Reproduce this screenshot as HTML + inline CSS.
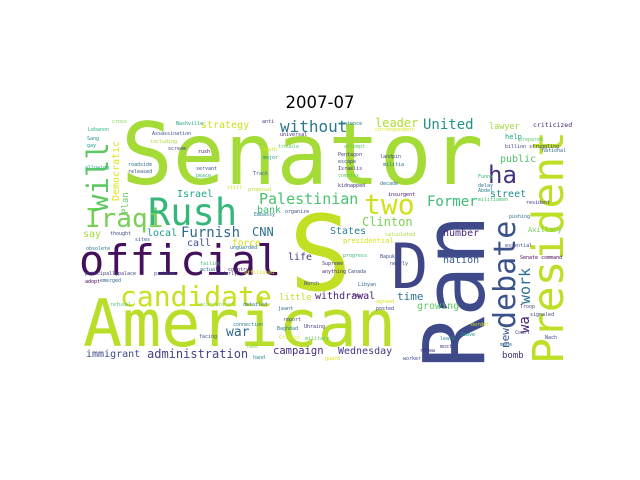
<!DOCTYPE html>
<html><head><meta charset="utf-8"><style>
html,body{margin:0;padding:0;background:#fff;}
#c{position:relative;width:640px;height:480px;overflow:hidden;background:#fff;}
#c span{position:absolute;white-space:nowrap;line-height:1;font-family:"DejaVu Sans Mono","Liberation Mono",monospace;}
#c span.r{transform:rotate(-90deg);transform-origin:0 0;}
#t{position:absolute;left:0;width:640px;top:95px;text-align:center;font-family:"DejaVu Sans","Liberation Sans",sans-serif;font-size:16.5px;color:#000;line-height:1;}
</style></head><body><div id="c">
<div id="t">2007-07</div>

<span style="left:121px;top:112px;font-size:86px;color:#a5db36">Senator</span>
<span style="left:83px;top:292px;font-size:65px;color:#b8de29">American</span>
<span style="left:289px;top:202px;font-size:104px;color:#c2df23">S</span>
<span style="left:79px;top:240px;font-size:42px;color:#440f5b">official</span>
<span style="left:148px;top:194px;font-size:37px;color:#35b779">Rush</span>
<span style="left:120px;top:283px;font-size:28px;color:#c8e020">candidate</span>
<span style="left:391px;top:236px;font-size:62px;color:#404588">D</span>
<span style="left:364px;top:191px;font-size:28px;color:#d0e11c">two</span>
<span style="left:488px;top:163px;font-size:24px;color:#46307e">ha</span>
<span style="left:85px;top:206px;font-size:26px;color:#75d054">Iraqi</span>
<span style="left:259px;top:192px;font-size:15px;color:#4ac16d">Palestinian</span>

<span class="r" style="left:413px;top:368px;font-size:85px;color:#3e4a89">Ran</span>
<span class="r" style="left:528px;top:364px;font-size:43px;color:#bddf26">President</span>
<span class="r" style="left:491px;top:329px;font-size:30px;color:#3b528b">debate</span>
<span class="r" style="left:84px;top:212px;font-size:29px;color:#5ec962">will</span>
<span class="r" style="left:112px;top:201px;font-size:10px;color:#dde318">Democratic</span>
<span class="r" style="left:122px;top:214px;font-size:9px;color:#65cb5e">Plan</span>
<span class="r" style="left:518px;top:304px;font-size:15px;color:#2d708e">work</span>
<span class="r" style="left:518px;top:333px;font-size:14px;color:#481f70">wa</span>
<span class="r" style="left:500px;top:348px;font-size:11px;color:#3a548c">new</span>

<span style="left:201px;top:121px;font-size:10px;color:#cde11d">strategy</span>
<span style="left:280px;top:119px;font-size:16px;color:#2a788e">without</span>
<span style="left:177px;top:190px;font-size:10px;color:#22a785">Israel</span>
<span style="left:257px;top:206px;font-size:10px;color:#3dbc74">bank</span>
<span style="left:83px;top:230px;font-size:10px;color:#a2da37">say</span>
<span style="left:147px;top:229px;font-size:10px;color:#1f9a8a">local</span>
<span style="left:181px;top:226px;font-size:14px;color:#31688e">Furnish</span>
<span style="left:252px;top:226px;font-size:12px;color:#2c728e">CNN</span>
<span style="left:187px;top:239px;font-size:10px;color:#3e4c8a">call</span>
<span style="left:232px;top:239px;font-size:9.5px;color:#d5e21a">force</span>
<span style="left:288px;top:253px;font-size:10px;color:#453581">life</span>
<span style="left:226px;top:326px;font-size:13px;color:#31688e">war</span>
<span style="left:279px;top:294px;font-size:9px;color:#c0df25">little</span>
<span style="left:86px;top:350px;font-size:10px;color:#3e4989">immigrant</span>
<span style="left:147px;top:348px;font-size:12px;color:#414487">administration</span>
<span style="left:273px;top:346px;font-size:10.5px;color:#472d7b">campaign</span>
<span style="left:375px;top:117px;font-size:12px;color:#b0dd2f">leader</span>
<span style="left:423px;top:118px;font-size:14px;color:#21918c">United</span>
<span style="left:489px;top:123px;font-size:8.5px;color:#a0da39">lawyer</span>
<span style="left:533px;top:122px;font-size:6.5px;color:#482374">criticized</span>
<span style="left:500px;top:155px;font-size:10px;color:#4ac16d">public</span>
<span style="left:490px;top:190px;font-size:10px;color:#228c8d">street</span>
<span style="left:427px;top:195px;font-size:14px;color:#3bbb75">Former</span>
<span style="left:362px;top:216px;font-size:12px;color:#7ad151">Clinton</span>
<span style="left:330px;top:227px;font-size:10px;color:#26828e">States</span>
<span style="left:343px;top:238px;font-size:7px;color:#d8e219">presidential</span>
<span style="left:443px;top:229px;font-size:10px;color:#482878">number</span>
<span style="left:443px;top:256px;font-size:10px;color:#34608d">nation</span>
<span style="left:528px;top:227px;font-size:7px;color:#6ccd5a">Axillary</span>
<span style="left:397px;top:291px;font-size:11px;color:#2a768e">time</span>
<span style="left:315px;top:292px;font-size:10px;color:#482173">withdrawal</span>
<span style="left:417px;top:302px;font-size:10px;color:#5ac864">growing</span>
<span style="left:338px;top:347px;font-size:10px;color:#453882">Wednesday</span>
<span style="left:502px;top:352px;font-size:9px;color:#46337e">bomb</span>
<span style="left:505px;top:134px;font-size:7px;color:#1fa188">help</span>

<span style="left:112px;top:120px;font-size:5px;color:#7ad151">cross</span>
<span style="left:88px;top:128px;font-size:5px;color:#2db27d">Lebanon</span>
<span style="left:176px;top:122px;font-size:5px;color:#20a486">Nashville</span>
<span style="left:152px;top:132px;font-size:5px;color:#3f4788">Assassination</span>
<span style="left:150px;top:140px;font-size:5px;color:#addc30">including</span>
<span style="left:168px;top:147px;font-size:5px;color:#404688">scream</span>
<span style="left:87px;top:137px;font-size:5px;color:#218e8d">Sang</span>
<span style="left:87px;top:144px;font-size:5px;color:#1fa187">gay</span>
<span style="left:85px;top:166px;font-size:5px;color:#25ac82">allowing</span>
<span style="left:128px;top:163px;font-size:5px;color:#2c728e">roadside</span>
<span style="left:128px;top:170px;font-size:5px;color:#3a548c">released</span>
<span style="left:196px;top:167px;font-size:5px;color:#3f4a8a">servant</span>
<span style="left:196px;top:174px;font-size:5px;color:#35b779">peace</span>
<span style="left:198px;top:150px;font-size:5px;color:#481467">rush</span>
<span style="left:248px;top:188px;font-size:5px;color:#bddf26">proposal</span>
<span style="left:227px;top:186px;font-size:5px;color:#d2e21b">still</span>
<span style="left:253px;top:172px;font-size:5px;color:#306a8e">Track</span>
<span style="left:262px;top:148px;font-size:5px;color:#d0e11c">death</span>
<span style="left:263px;top:156px;font-size:5px;color:#1f968b">major</span>
<span style="left:278px;top:145px;font-size:5px;color:#5ac864">trouble</span>
<span style="left:262px;top:120px;font-size:5px;color:#443a83">anti</span>
<span style="left:280px;top:133px;font-size:5px;color:#472a7a">universal</span>
<span style="left:254px;top:213px;font-size:5px;color:#2a788e">Embassy</span>
<span style="left:285px;top:210px;font-size:5px;color:#3e4c8a">organize</span>
<span style="left:86px;top:247px;font-size:5px;color:#2c738e">obsolete</span>
<span style="left:110px;top:232px;font-size:5px;color:#414487">thought</span>
<span style="left:135px;top:238px;font-size:5px;color:#3b528b">sites</span>
<span style="left:230px;top:246px;font-size:5px;color:#2d708e">unguarded</span>
<span style="left:200px;top:262px;font-size:5px;color:#40bd72">failing</span>
<span style="left:200px;top:268px;font-size:5px;color:#31688e">actual</span>
<span style="left:228px;top:268px;font-size:5px;color:#46327e">country</span>
<span style="left:85px;top:272px;font-size:5px;color:#414487">principally</span>
<span style="left:118px;top:272px;font-size:5px;color:#433d84">palace</span>
<span style="left:154px;top:272px;font-size:5px;color:#3a548c">problem</span>
<span style="left:216px;top:272px;font-size:5px;color:#3f4788">orderly</span>
<span style="left:244px;top:271px;font-size:5px;color:#d8e219">affiliated</span>
<span style="left:85px;top:280px;font-size:5px;color:#440154">adopt</span>
<span style="left:100px;top:279px;font-size:5px;color:#31688e">emerged</span>
<span style="left:110px;top:303px;font-size:5px;color:#4ac16d">refusal</span>
<span style="left:197px;top:303px;font-size:5px;color:#86d549">incarcerated</span>
<span style="left:243px;top:303px;font-size:5px;color:#2c738e">detailed</span>
<span style="left:278px;top:307px;font-size:5px;color:#306a8e">jeant</span>
<span style="left:283px;top:318px;font-size:5px;color:#414487">report</span>
<span style="left:277px;top:327px;font-size:5px;color:#2a788e">Baghdad</span>
<span style="left:279px;top:336px;font-size:5px;color:#dde318">Critics</span>
<span style="left:233px;top:323px;font-size:5px;color:#26828e">connection</span>
<span style="left:199px;top:335px;font-size:5px;color:#3b528b">facing</span>
<span style="left:246px;top:345px;font-size:5px;color:#84d44b">take</span>
<span style="left:253px;top:356px;font-size:5px;color:#23898e">hand</span>
<span style="left:338px;top:122px;font-size:5px;color:#2a788e">sentence</span>
<span style="left:375px;top:128px;font-size:5px;color:#dde318">correspondent</span>
<span style="left:344px;top:145px;font-size:5px;color:#5ec962">attempt</span>
<span style="left:338px;top:153px;font-size:5px;color:#453781">Pentagon</span>
<span style="left:338px;top:160px;font-size:5px;color:#3b528b">escape</span>
<span style="left:338px;top:167px;font-size:5px;color:#46307e">Israelis</span>
<span style="left:338px;top:174px;font-size:5px;color:#5ec962">complex</span>
<span style="left:338px;top:184px;font-size:5px;color:#46327e">kidnapped</span>
<span style="left:380px;top:155px;font-size:5px;color:#3e4989">landpin</span>
<span style="left:383px;top:163px;font-size:5px;color:#2f6c8e">militia</span>
<span style="left:380px;top:182px;font-size:5px;color:#2c728e">decade</span>
<span style="left:388px;top:193px;font-size:5px;color:#471063">insurgent</span>
<span style="left:390px;top:262px;font-size:5px;color:#3b528b">nearly</span>
<span style="left:385px;top:233px;font-size:5px;color:#a5db36">calculated</span>
<span style="left:380px;top:255px;font-size:5px;color:#3b528b">Bapuka</span>
<span style="left:343px;top:254px;font-size:5px;color:#35b779">progress</span>
<span style="left:348px;top:270px;font-size:5px;color:#3e4a89">Canada</span>
<span style="left:358px;top:283px;font-size:5px;color:#31688e">Libyan</span>
<span style="left:352px;top:294px;font-size:5px;color:#440154">fear</span>
<span style="left:376px;top:300px;font-size:5px;color:#dde318">agreed</span>
<span style="left:376px;top:307px;font-size:5px;color:#414487">posted</span>
<span style="left:322px;top:262px;font-size:5px;color:#453882">Supreme</span>
<span style="left:322px;top:270px;font-size:5px;color:#481a6c">anything</span>
<span style="left:304px;top:282px;font-size:5px;color:#3b528b">Narch</span>
<span style="left:304px;top:325px;font-size:5px;color:#46337e">Uhraing</span>
<span style="left:305px;top:337px;font-size:5px;color:#5ec962">military</span>
<span style="left:325px;top:357px;font-size:5px;color:#dde318">guard</span>
<span style="left:403px;top:357px;font-size:5px;color:#3e4a89">worker</span>
<span style="left:420px;top:349px;font-size:5px;color:#46307e">renew</span>
<span style="left:440px;top:357px;font-size:5px;color:#3e4c8a">Johnson</span>
<span style="left:440px;top:337px;font-size:5px;color:#23888e">leave</span>
<span style="left:440px;top:345px;font-size:5px;color:#453882">most</span>
<span style="left:505px;top:145px;font-size:5px;color:#404588">billion struggling</span>
<span style="left:478px;top:175px;font-size:5px;color:#35b779">Funny</span>
<span style="left:478px;top:184px;font-size:5px;color:#2e6f8e">delay</span>
<span style="left:478px;top:189px;font-size:5px;color:#25848e">Abdel</span>
<span style="left:478px;top:198px;font-size:5px;color:#46c06f">militiamen</span>
<span style="left:526px;top:201px;font-size:5px;color:#46307e">resident</span>
<span style="left:509px;top:215px;font-size:5px;color:#2c738e">pushing</span>
<span style="left:519px;top:138px;font-size:5px;color:#5ec962">prepared</span>
<span style="left:542px;top:149px;font-size:5px;color:#31688e">national</span>
<span style="left:505px;top:244px;font-size:5px;color:#3e4c8a">essential</span>
<span style="left:520px;top:256px;font-size:5px;color:#440154">Senate command</span>
<span style="left:520px;top:305px;font-size:5px;color:#3e4a89">Troop</span>
<span style="left:530px;top:313px;font-size:5px;color:#414487">signaled</span>
<span style="left:460px;top:333px;font-size:5px;color:#1f968b">Jeave</span>
<span style="left:471px;top:323px;font-size:5px;color:#dde318">border</span>
<span style="left:500px;top:343px;font-size:5px;color:#2c728e">made</span>
<span style="left:515px;top:331px;font-size:5px;color:#414487">Court</span>
<span style="left:545px;top:336px;font-size:5px;color:#3e4c8a">Nach</span>
</div></body></html>
